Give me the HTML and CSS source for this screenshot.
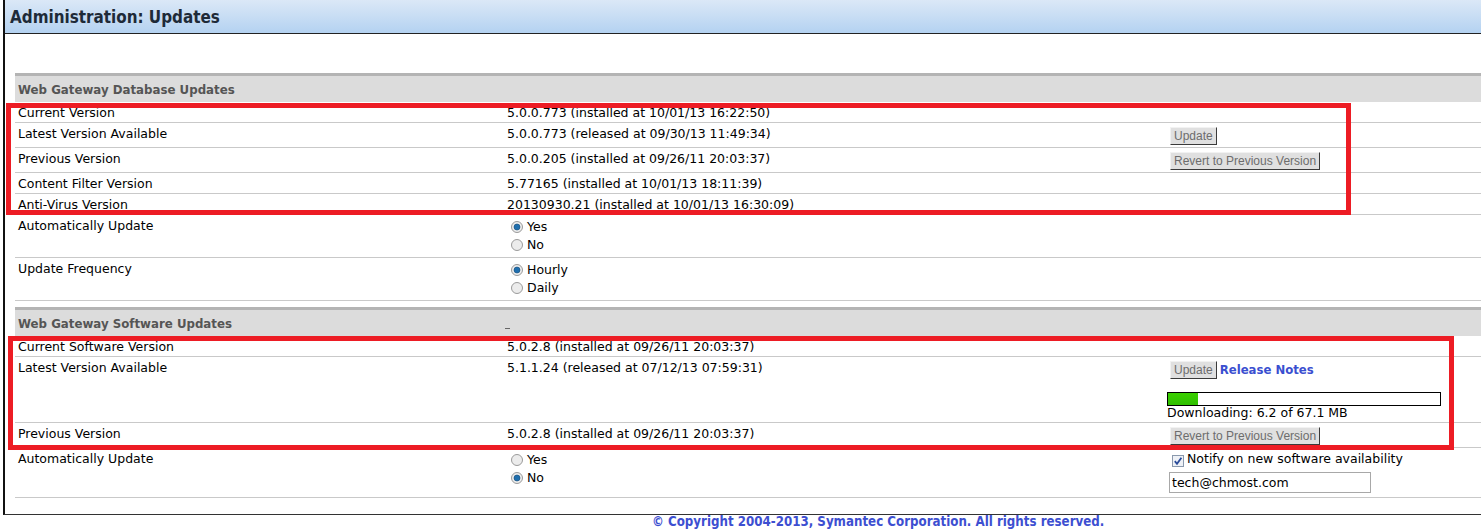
FILE: index.html
```html
<!DOCTYPE html>
<html>
<head>
<meta charset="utf-8">
<title>Administration: Updates</title>
<link rel="stylesheet" href="styles.css">
</head>
<body>
<div class="page">
  <div class="frame">
    <div class="titlebar"><h1>Administration: Updates</h1></div>
    <div class="content">
      <div class="section">
        <div class="sec-head"><div class="head-title">Web Gateway Database Updates</div><div></div><div></div></div>
        <div class="row h21"><div class="cell">Current Version</div><div class="cell">5.0.0.773 (installed at 10/01/13 16:22:50)</div><div class="act"></div></div>
        <div class="row h25"><div class="cell">Latest Version Available</div><div class="cell">5.0.0.773 (released at 09/30/13 11:49:34)</div><div class="act"><button class="btn">Update</button></div></div>
        <div class="row h25"><div class="cell">Previous Version</div><div class="cell">5.0.0.205 (installed at 09/26/11 20:03:37)</div><div class="act"><button class="btn">Revert to Previous Version</button></div></div>
        <div class="row h21"><div class="cell">Content Filter Version</div><div class="cell">5.77165 (installed at 10/01/13 18:11:39)</div><div class="act"></div></div>
        <div class="row h21"><div class="cell">Anti-Virus Version</div><div class="cell">20130930.21 (installed at 10/01/13 16:30:09)</div><div class="act"></div></div>
        <div class="row h43"><div class="cell">Automatically Update</div>
          <div class="cell opts">
            <div class="opt"><svg class="radio" viewBox="0 0 12 12"><circle cx="6" cy="6" r="5.5" class="ring"/><circle cx="6" cy="6" r="3" class="dot"/></svg>Yes</div>
            <div class="opt"><svg class="radio" viewBox="0 0 12 12"><circle cx="6" cy="6" r="5.5" class="ring"/></svg>No</div>
          </div><div class="act"></div></div>
        <div class="row h43"><div class="cell">Update Frequency</div>
          <div class="cell opts">
            <div class="opt"><svg class="radio" viewBox="0 0 12 12"><circle cx="6" cy="6" r="5.5" class="ring"/><circle cx="6" cy="6" r="3" class="dot"/></svg>Hourly</div>
            <div class="opt"><svg class="radio" viewBox="0 0 12 12"><circle cx="6" cy="6" r="5.5" class="ring"/></svg>Daily</div>
          </div><div class="act"></div></div>
      </div>
      <div class="section">
        <div class="sec-head"><div class="head-title">Web Gateway Software Updates</div><div class="head-mid"><span class="dash"></span></div><div></div></div>
        <div class="row h21"><div class="cell">Current Software Version</div><div class="cell">5.0.2.8 (installed at 09/26/11 20:03:37)</div><div class="act"></div></div>
        <div class="row h66"><div class="cell">Latest Version Available</div><div class="cell">5.1.1.24 (released at 07/12/13 07:59:31)</div>
          <div class="act">
            <div class="btnline"><button class="btn">Update</button><a class="notes" href="#">Release Notes</a></div>
            <div class="progress"><div class="fill"></div></div>
            <div class="dl">Downloading: 6.2 of 67.1 MB</div>
          </div></div>
        <div class="row h25"><div class="cell">Previous Version</div><div class="cell">5.0.2.8 (installed at 09/26/11 20:03:37)</div><div class="act"><button class="btn">Revert to Previous Version</button></div></div>
        <div class="row h50"><div class="cell">Automatically Update</div>
          <div class="cell opts">
            <div class="opt"><svg class="radio" viewBox="0 0 12 12"><circle cx="6" cy="6" r="5.5" class="ring"/></svg>Yes</div>
            <div class="opt"><svg class="radio" viewBox="0 0 12 12"><circle cx="6" cy="6" r="5.5" class="ring"/><circle cx="6" cy="6" r="3" class="dot"/></svg>No</div>
          </div>
          <div class="act act-chk">
            <div class="chkline"><svg class="chk" viewBox="0 0 12 12"><rect x="0.5" y="0.5" width="11" height="11" class="box"/><path d="M2.8 6.2 L5 8.8 L9.4 2.8" class="tick"/></svg>Notify on new software availability</div>
            <div class="email">tech@chmost.com</div>
          </div></div>
      </div>
    </div>
  </div>
  <div class="footer">© Copyright 2004-2013, Symantec Corporation. All rights reserved.</div>
  <div class="mark mark1"></div>
  <div class="mark mark2"></div>
</div>
</body>
</html>
```
FILE: styles.css
```css
html, body {
  margin: 0;
  padding: 0;
  background: #fff;
}
body {
  font-family: "DejaVu Sans", Verdana, sans-serif;
  font-size: 12.5px;
  color: #000;
}
.page {
  position: relative;
  width: 1481px;
  height: 530px;
  overflow: hidden;
}
.frame {
  margin-left: 3px;
  border-left: 2px solid #111;
  border-bottom: 1px solid #333;
}
.titlebar {
  height: 33px;
  border-bottom: 1px solid #222;
  background: linear-gradient(#dbe8f7, #b4d2f1);
  display: flex;
  align-items: center;
  padding-left: 5px;
}
.titlebar h1 {
  margin: 0;
  font-family: "DejaVu Sans Condensed", "DejaVu Sans", sans-serif;
  font-stretch: condensed;
  font-weight: bold;
  font-size: 16.9px;
  color: #1e2a38;
}
.content {
  padding: 39px 0 16px 10px;
}
.section + .section {
  margin-top: 6px;
}
.sec-head, .row {
  display: grid;
  grid-template-columns: 489px 663px 1fr;
  box-sizing: border-box;
}
.sec-head {
  height: 29px;
  border-top: 3px solid #b4b4b4;
  background: #dcdcdc;
  align-items: center;
}
.head-title {
  padding: 2px 0 0 3px;
  font-weight: bold;
  font-size: 11.8px;
  color: #555;
}
.head-mid {
  padding-left: 1px;
  align-self: end;
  height: 8px;
}
.dash {
  display: block;
  width: 5px;
  height: 1px;
  background: #666;
}
.row {
  border-bottom: 1px solid #c9c9c9;
}
.h21 { height: 21px; }
.h25 { height: 25px; }
.h43 { height: 43px; }
.h50 { height: 50px; }
.h66 { height: 66px; }
.cell {
  padding: 3px 3px 0;
  line-height: 16px;
  white-space: nowrap;
}
.act {
  padding: 2px 0 0;
  line-height: 16px;
  white-space: nowrap;
}
.act-chk {
  padding-top: 3px;
}
.opts {
  padding-left: 7px;
}
.opt {
  display: flex;
  align-items: center;
  height: 18px;
  gap: 4px;
}
.radio {
  width: 12px;
  height: 12px;
  flex: none;
}
.ring {
  fill: #ececec;
  stroke: #9a9a9a;
  stroke-width: 1;
}
.dot {
  fill: #1f6fae;
  stroke: #0d4677;
  stroke-width: 0.6;
}
.btn {
  display: inline-block;
  box-sizing: border-box;
  height: 18px;
  margin: 2px 0 0 3px;
  padding: 0 3px;
  font-family: "Liberation Sans", Arial, sans-serif;
  font-size: 12px;
  line-height: 16px;
  color: #6d6d6d;
  background: #e0e0e0;
  border: 1px solid;
  border-color: #f2f2f2 #3a3a3a #3a3a3a #f2f2f2;
  border-radius: 0;
  vertical-align: top;
}
.btnline {
  display: flex;
  align-items: center;
  height: 20px;
  gap: 3px;
}
.btnline .btn {
  margin-top: 2px;
}
.notes {
  font-weight: bold;
  font-size: 11.7px;
  color: #3a4fd0;
  text-decoration: none;
  margin-top: 2px;
}
.progress {
  width: 274px;
  height: 14px;
  box-sizing: border-box;
  border: 1px solid #000;
  margin-top: 13px;
  background: #fff;
}
.fill {
  width: 30px;
  height: 100%;
  background: linear-gradient(#3ad000, #2fbf00);
}
.dl {
  line-height: 14px;
}
.chkline {
  display: flex;
  align-items: flex-start;
  gap: 3px;
  height: 16px;
  padding-left: 5px;
}
.chk {
  width: 12px;
  height: 12px;
  margin-top: 4px;
  flex: none;
}
.box {
  fill: #eef1f6;
  stroke: #8a99ad;
  stroke-width: 1;
}
.tick {
  fill: none;
  stroke: #2a4b9a;
  stroke-width: 1.8;
}
.email {
  box-sizing: border-box;
  width: 202px;
  height: 21px;
  margin: 5px 0 0 2px;
  border: 1px solid #a8a8a8;
  padding: 1px 2px 0;
  line-height: 17px;
}
.footer {
  padding-left: 652px;
  font-family: "DejaVu Sans Condensed", "DejaVu Sans", sans-serif;
  font-stretch: condensed;
  font-weight: bold;
  font-size: 13.2px;
  line-height: 14px;
  color: #3d4fd1;
}
.mark {
  position: absolute;
  box-sizing: border-box;
  border: 5px solid #ed1c24;
}
.mark1 {
  left: 6px;
  top: 103px;
  width: 1345px;
  height: 112px;
}
.mark2 {
  left: 8px;
  top: 336px;
  width: 1446px;
  height: 114px;
}
```
